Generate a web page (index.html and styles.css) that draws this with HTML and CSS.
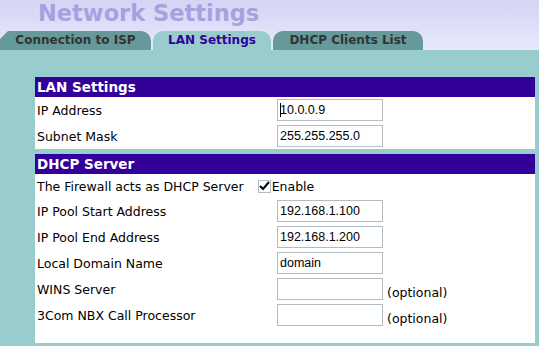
FILE: index.html
```html
<!DOCTYPE html>
<html>
<head>
    <title>Network Settings</title>
    <link rel="stylesheet" href="styles.css">
</head>
<body>
    <div class="top">
        <h1>Network Settings</h1>
        <div class="tabs">
            <div class="tab first">Connection to ISP</div>
            <div class="tab active">LAN Settings</div>
            <div class="tab last">DHCP Clients List</div>
        </div>
    </div>
    <div class="content">
        <div class="panel">
            <div class="section-head">LAN Settings</div>
            <div class="rows">
                <div class="row">
                    <span class="label">IP Address</span>
                    <span class="field caret-wrap"><input type="text" value="10.0.0.9"><i class="caret"></i></span>
                </div>
                <div class="row">
                    <span class="label">Subnet Mask</span>
                    <span class="field"><input type="text" value="255.255.255.0"></span>
                </div>
            </div>
        </div>
        <div class="panel">
            <div class="section-head">DHCP Server</div>
            <div class="rows dhcp">
                <div class="row check-row">
                    <span class="label">The Firewall acts as DHCP Server</span>
                    <span class="check">
                        <svg width="11" height="11" viewBox="0 0 11 11"><path d="M1 5 L4 8 L10 1" fill="none" stroke="#000" stroke-width="2"/></svg>
                    </span>
                    <span class="check-text">Enable</span>
                </div>
                <div class="row">
                    <span class="label">IP Pool Start Address</span>
                    <span class="field"><input type="text" value="192.168.1.100"></span>
                </div>
                <div class="row">
                    <span class="label">IP Pool End Address</span>
                    <span class="field"><input type="text" value="192.168.1.200"></span>
                </div>
                <div class="row">
                    <span class="label">Local Domain Name</span>
                    <span class="field"><input type="text" value="domain"></span>
                </div>
                <div class="row">
                    <span class="label">WINS Server</span>
                    <span class="field"><input type="text" value=""><span class="hint">(optional)</span></span>
                </div>
                <div class="row">
                    <span class="label">3Com NBX Call Processor</span>
                    <span class="field"><input type="text" value=""><span class="hint">(optional)</span></span>
                </div>
            </div>
        </div>
    </div>
</body>
</html>
```
FILE: styles.css
```css
body {
    margin: 0;
    font-family: "DejaVu Sans", Verdana, sans-serif;
    font-size: 12.5px;
    color: #000000;
    background-color: #99CCCC;
}
.top {
    height: 50px;
    background: linear-gradient(to bottom, #d4d4f4, #e8e8fc);
    display: flex;
    flex-direction: column;
}
h1 {
    margin: 0;
    height: 31px;
    padding-left: 38px;
    font-size: 22.5px;
    line-height: 27px;
    font-weight: bold;
    color: #a9a0e0;
}
.tabs {
    display: flex;
    height: 19px;
    gap: 2px;
}
.tab {
    height: 19px;
    line-height: 19px;
    background: #669999;
    color: #333333;
    font-weight: bold;
    font-size: 12px;
    text-align: center;
    border-radius: 10px 10px 0 0;
}
.tab.first {
    width: 151px;
    border-top-left-radius: 0;
    clip-path: polygon(0 8px, 8px 0, 100% 0, 100% 100%, 0 100%);
}
.tab.active {
    width: 118px;
    background: #99CCCC;
    color: #330099;
}
.tab.last {
    width: 150px;
}
.content {
    padding: 27px 4px 3px 35px;
    display: flex;
    flex-direction: column;
    gap: 5px;
}
.panel {
    background: #ffffff;
}
.section-head {
    height: 20px;
    line-height: 20px;
    background: #330099;
    color: #ffffff;
    font-weight: bold;
    font-size: 13.5px;
    padding-left: 2px;
}
.rows {
    display: flex;
    flex-direction: column;
}
.rows.dhcp {
    padding-bottom: 15px;
}
.row {
    display: grid;
    grid-template-columns: 240px auto;
    align-items: center;
    height: 26px;
    padding-left: 2px;
}
.row.check-row {
    display: flex;
    height: 24px;
}
.check {
    width: 11px;
    height: 11px;
    border: 1px solid #b4bcc4;
    background: #ffffff;
    margin-left: 14px;
    display: flex;
}
.check-text {
    margin-left: 1px;
}
.field {
    display: flex;
    align-items: flex-end;
}
.field input {
    width: 100px;
    height: 18px;
    margin: 0;
    padding: 1px 2px;
    border: 1px solid #b4bcc4;
    font-family: "Liberation Sans", Tahoma, sans-serif;
    font-size: 12.5px;
    color: #000000;
    outline: none;
}
.hint {
    margin-left: 4px;
    line-height: 14px;
}
.caret-wrap {
    position: relative;
}
.caret {
    position: absolute;
    left: 3px;
    top: 4px;
    width: 1px;
    height: 14px;
    background: #000000;
}
```
